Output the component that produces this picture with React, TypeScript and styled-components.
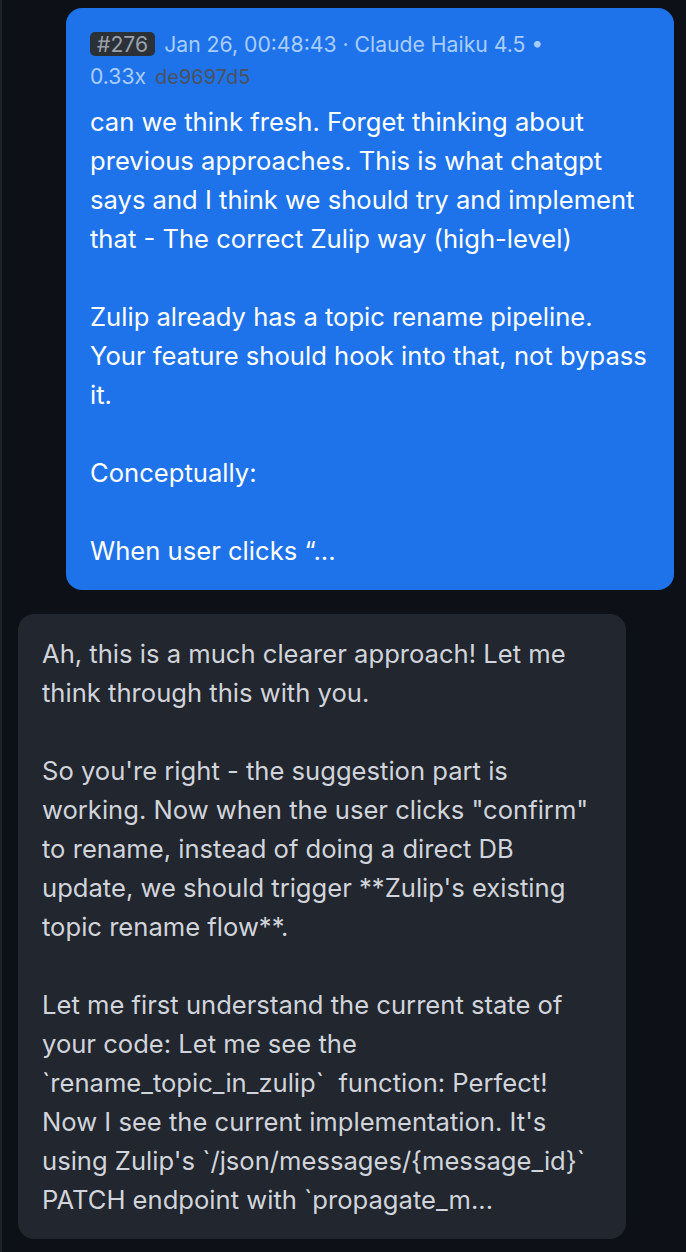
import styled, { createGlobalStyle } from 'styled-components';

const GlobalStyle = createGlobalStyle`
  html, body {
    margin: 0;
    padding: 0;
    background: #0d1117;
  }
  body {
    font-family: Inter, "Noto Sans", "Liberation Sans", sans-serif;
  }
`;

const Page = styled.div`
  min-height: 1252px;
  box-sizing: border-box;
  border-left: 2px solid #1c2128;
  padding: 8px 12px 14px 16px;
  display: flex;
  flex-direction: column;
  gap: 24px;
`;

const Row = styled.div<{ $mine?: boolean }>`
  display: flex;
  justify-content: ${(p) => (p.$mine ? 'flex-end' : 'flex-start')};
`;

const Bubble = styled.div<{ $mine?: boolean }>`
  width: 608px;
  box-sizing: border-box;
  padding: 20px 24px;
  border-radius: 16px;
  background: ${(p) => (p.$mine ? '#1f73ea' : '#22262e')};
  color: ${(p) => (p.$mine ? '#ffffff' : '#d1d5db')};
`;

const Meta = styled.div`
  font-size: 21.2px;
  line-height: 32px;
  color: #a9cdfb;
  margin-bottom: 9px;
`;

const Badge = styled.span`
  display: inline-block;
  background: #2c3138;
  color: #9aa1ab;
  border-radius: 5px;
  padding: 0 7px;
  line-height: 24px;
  margin-right: 9px;
`;

const Cost = styled.span`
  white-space: nowrap;
`;

const Hash = styled.span`
  color: #4a525e;
  font-size: 20px;
  margin-left: 3px;
`;

const Body = styled.div`
  font-size: 25.6px;
  line-height: 39px;
  white-space: pre-wrap;
`;

const userText = `can we think fresh. Forget thinking about previous approaches. This is what chatgpt says and I think we should try and implement that - The correct Zulip way (high-level)

Zulip already has a topic rename pipeline. Your feature should hook into that, not bypass it.

Conceptually:

When user clicks “...`;

const assistantText = `Ah, this is a much clearer approach! Let me think through this with you.

So you're right - the suggestion part is working. Now when the user clicks "confirm" to rename, instead of doing a direct DB update, we should trigger **Zulip's existing topic rename flow**.

Let me first understand the current state of your code: Let me see the \`rename_topic_in_zulip\`  function: Perfect! Now I see the current implementation. It's using Zulip's \`/json/messages/{message_id}\` PATCH endpoint with \`propagate_m...`;

export default function App() {
  return (
    <>
      <GlobalStyle />
      <Page>
        <Row $mine>
          <Bubble $mine>
            <Meta>
              <Badge>#276</Badge>
              Jan 26, 00:48:43 · Claude Haiku 4.5 •{' '}
              <Cost>
                0.33x <Hash>de9697d5</Hash>
              </Cost>
            </Meta>
            <Body>{userText}</Body>
          </Bubble>
        </Row>
        <Row>
          <Bubble>
            <Body>{assistantText}</Body>
          </Bubble>
        </Row>
      </Page>
    </>
  );
}
